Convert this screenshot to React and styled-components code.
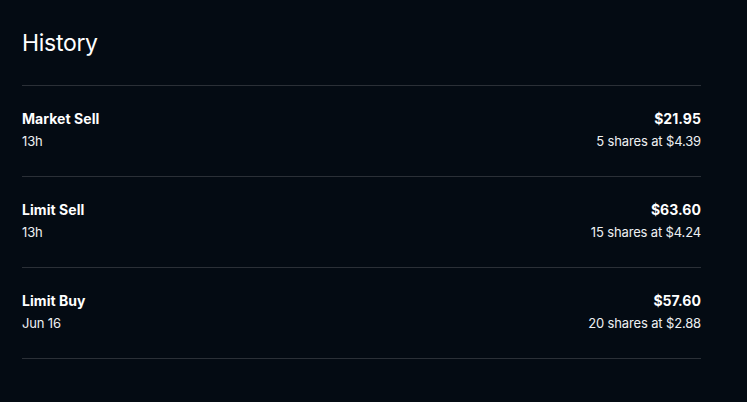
import React from 'react';
import styled, { createGlobalStyle } from 'styled-components';

const GlobalStyle = createGlobalStyle`
  html, body {
    margin: 0;
    padding: 0;
    background-color: #040b13;
  }
  body {
    font-family: Inter, 'Liberation Sans', sans-serif;
    color: #ffffff;
  }
`;

const PageWrapper = styled('div')`
  width: 747px;
  height: 402px;
  box-sizing: border-box;
  padding: 26px 46px 0 22px;
  background-color: #040b13;
`;

const TitleWrapper = styled('h2')`
  margin: 0;
  font-size: 23px;
  font-weight: 400;
  line-height: 34px;
  letter-spacing: -0.3px;
  padding-bottom: 25px;
  border-bottom: 1px solid #2b3037;
`;

const RowWrapper = styled('div')`
  display: flex;
  justify-content: space-between;
  align-items: flex-start;
  padding: 23px 0 25px;
  border-bottom: 1px solid #2b3037;
`;

const ColumnWrapper = styled('div')`
  display: flex;
  flex-direction: column;
  gap: 2px;
  align-items: ${(props) => (props.right ? 'flex-end' : 'flex-start')};
`;

const MainText = styled('span')`
  font-size: 14px;
  font-weight: 700;
  line-height: 20px;
  letter-spacing: 0.05px;
`;

const SubText = styled('span')`
  font-size: 13px;
  font-weight: 400;
  line-height: 20px;
  letter-spacing: -0.15px;
  color: #eef0f2;
`;

const orders = [
  { type: 'Market Sell', time: '13h', total: '$21.95', detail: '5 shares at $4.39' },
  { type: 'Limit Sell', time: '13h', total: '$63.60', detail: '15 shares at $4.24' },
  { type: 'Limit Buy', time: 'Jun 16', total: '$57.60', detail: '20 shares at $2.88' },
];

const App = () => {
  //! Render
  return (
    <PageWrapper>
      <GlobalStyle />
      <TitleWrapper>History</TitleWrapper>
      {orders.map((order) => (
        <RowWrapper key={order.type}>
          <ColumnWrapper>
            <MainText>{order.type}</MainText>
            <SubText>{order.time}</SubText>
          </ColumnWrapper>
          <ColumnWrapper right>
            <MainText>{order.total}</MainText>
            <SubText>{order.detail}</SubText>
          </ColumnWrapper>
        </RowWrapper>
      ))}
    </PageWrapper>
  );
};

export default App;
